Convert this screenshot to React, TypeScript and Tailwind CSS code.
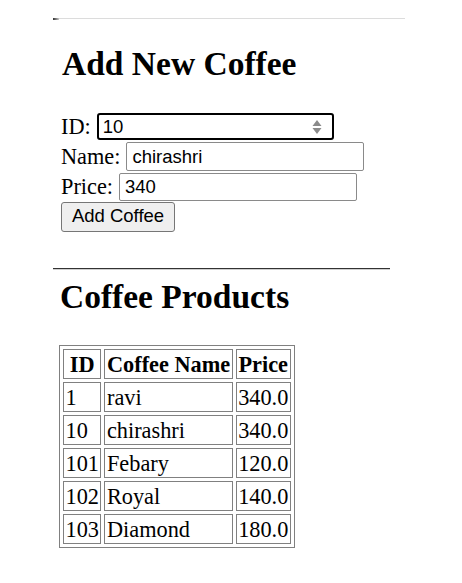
import React from "react";

const rows = [
  ["1", "ravi", "340.0"],
  ["10", "chirashri", "340.0"],
  ["101", "Febary", "120.0"],
  ["102", "Royal", "140.0"],
  ["103", "Diamond", "180.0"],
];

export default function App() {
  return (
    <div className="w-[462px] h-[583px] bg-white overflow-hidden text-black font-['Liberation_Serif',serif] text-[22.3px]">
      <div className="pt-[18px]">
        <div className="relative ml-[53px] w-[352px] h-[1px] bg-[#dcdcdc]">
          <div className="absolute left-0 top-0 w-[6px] h-[2px] bg-gradient-to-r from-[#333] to-[#ccc]" />
        </div>
      </div>
      <h1 className="mt-[26px] ml-[62px] text-[33.5px] leading-[38.5px] font-bold">Add New Coffee</h1>
      <div className="mt-[28px] ml-[61px] leading-[25px]">
        <div className="flex items-center h-[30px] gap-[6px]">
          <span>ID:</span>
          <div className="relative">
            <input
              readOnly
              value="10"
              className="w-[237px] h-[27px] border-2 border-black rounded-[3px] pl-[4px] font-['Liberation_Sans',Arial,sans-serif] text-[18.5px] outline-none bg-white"
            />
            <svg className="absolute right-[12px] top-[6px]" width="10" height="16" viewBox="0 0 10 16">
              <polygon points="5,1 9.5,7 0.5,7" fill="#8a8a8a" />
              <polygon points="0.5,9 9.5,9 5,15" fill="#8a8a8a" />
            </svg>
          </div>
        </div>
        <div className="flex items-center h-[30px] gap-[6px]">
          <span>Name:</span>
          <input
            readOnly
            value="chirashri"
            className="w-[238px] h-[29px] border border-[#8a8a8a] rounded-[2px] pl-[5px] font-['Liberation_Sans',Arial,sans-serif] text-[18.5px] outline-none bg-white"
          />
        </div>
        <div className="flex items-center h-[30px] gap-[6px]">
          <span>Price:</span>
          <input
            readOnly
            value="340"
            className="w-[238px] h-[28px] border border-[#8a8a8a] rounded-[2px] pl-[5px] font-['Liberation_Sans',Arial,sans-serif] text-[18.5px] outline-none bg-white"
          />
        </div>
        <div className="flex items-center h-[30px]">
          <button className="w-[114px] h-[30px] bg-[#efefef] border border-[#767676] rounded-[3px] font-['Liberation_Sans',Arial,sans-serif] text-[18.5px] leading-none">
            Add Coffee
          </button>
        </div>
      </div>
      <div className="mt-[36px] ml-[53px] w-[337px] border-t-[1.5px] border-[#333] border-b border-b-[#cfcfcf]" />
      <h2 className="mt-[8px] ml-[60px] text-[33.5px] leading-[38.5px] font-bold">Coffee Products</h2>
      <table className="mt-[29px] ml-[59px] border-separate border-spacing-[3px] border border-[#808080] leading-[25px]">
        <thead>
          <tr>
            <th className="border border-[#808080] px-[1.5px] py-[1.5px] font-bold text-center">ID</th>
            <th className="border border-[#808080] px-[1.5px] py-[1.5px] font-bold text-center">Coffee Name</th>
            <th className="border border-[#808080] px-[1.5px] py-[1.5px] font-bold text-center">Price</th>
          </tr>
        </thead>
        <tbody>
          {rows.map((r) => (
            <tr key={r[0]}>
              {r.map((c, i) => (
                <td key={i} className="border border-[#808080] px-[1.5px] py-[1.5px]">
                  {c}
                </td>
              ))}
            </tr>
          ))}
        </tbody>
      </table>
    </div>
  );
}
